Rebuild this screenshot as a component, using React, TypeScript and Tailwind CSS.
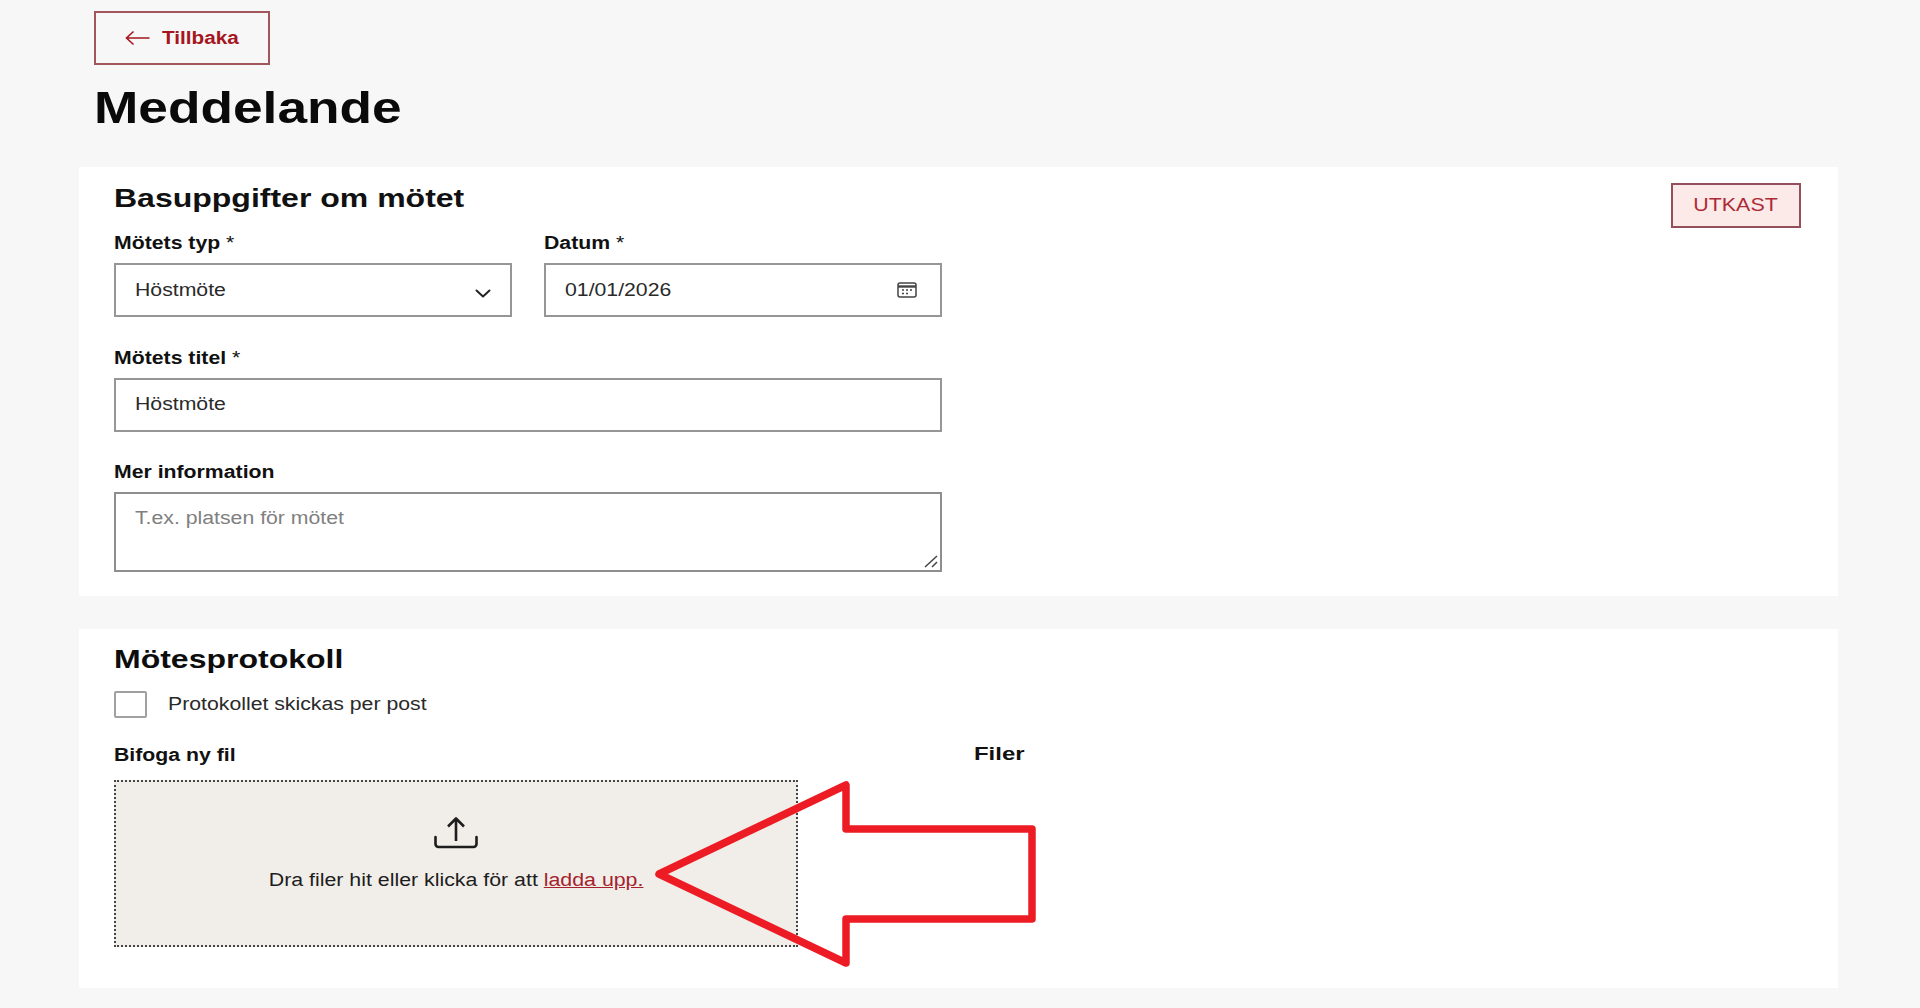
import type { ReactNode } from 'react'

const font = { fontFamily: '"Liberation Sans", Arial, sans-serif' }

function Wide({ children, className = 'origin-left scale-x-[1.18]' }: { children: ReactNode; className?: string }) {
  return <span className={`inline-block whitespace-nowrap ${className}`}>{children}</span>
}

function Label({ children, required }: { children: ReactNode; required?: boolean }) {
  return (
    <div className="h-5 text-[18px] leading-5 font-bold text-[#111]">
      <Wide>
        {children}
        {required && <span className="font-normal"> *</span>}
      </Wide>
    </div>
  )
}

function Field({ children, className = 'h-[54px]' }: { children: ReactNode; className?: string }) {
  return (
    <div className={`relative flex items-center justify-between border-2 border-[#969696] bg-white pr-[20px] pl-[19px] text-[18px] text-[#2a2a2a] ${className}`}>
      {children}
    </div>
  )
}

function Chevron() {
  return (
    <svg width="16" height="9" viewBox="0 0 16 9" fill="none" className="mt-[6px] -mr-[1px]">
      <path d="M1.5 1.5 8 7.5l6.5-6" stroke="#222" strokeWidth="2" strokeLinecap="round" strokeLinejoin="round" />
    </svg>
  )
}

function CalendarIcon() {
  return (
    <svg width="20" height="16" viewBox="0 0 20 16" fill="none">
      <rect x="1" y="1" width="18" height="14" rx="2" stroke="#444" strokeWidth="1.5" />
      <path d="M1 4.5h18" stroke="#444" strokeWidth="2.4" />
      <path d="M5 8h2M9 8h2M13 8h2M5 11.5h2M9 11.5h2" stroke="#444" strokeWidth="1.5" />
    </svg>
  )
}

function UploadIcon() {
  return (
    <svg width="44" height="32" viewBox="0 0 44 32" fill="none">
      <path d="M22 24V2M14 9.5 22 1.5l8 8" stroke="#1d1d1d" strokeWidth="2.6" strokeLinejoin="round" />
      <path d="M1.5 20v7a3 3 0 0 0 3 3h35a3 3 0 0 0 3-3v-7" stroke="#1d1d1d" strokeWidth="2.6" strokeLinecap="round" />
    </svg>
  )
}

export default function App() {
  return (
    <div className="relative h-[1008px] overflow-hidden bg-[#f7f7f7]" style={font}>
      <div className="pr-[82px] pl-[79px]">
        <div className="pl-[15px]">
          <a className="mt-[11px] flex h-[54px] w-[176px] items-center border-2 border-[#a0565b] pl-[29px] text-[18px] font-bold text-[#a5161f]">
            <svg width="25" height="16" viewBox="0 0 25 16" fill="none">
              <path d="M24.5 8H2M8.5 1.5 1.5 8l7 6.5" stroke="#a5161f" strokeWidth="1.6" />
            </svg>
            <span className="ml-[12px]">
              <Wide className="origin-left scale-x-[1.15]">Tillbaka</Wide>
            </span>
          </a>
          <h1 className="mt-[19px] h-12 text-[44px] leading-[48px] font-bold text-[#0a0a0a]">
            <Wide className="origin-left scale-x-[1.21]">Meddelande</Wide>
          </h1>
        </div>

        <section className="mt-[35px] flex h-[429px] items-start justify-between bg-white pt-[16px] pr-[37px] pl-[35px]">
          <div className="w-[828px]">
            <h2 className="h-[30px] text-[25px] leading-[30px] font-bold text-[#111]">
              <Wide className="origin-left scale-x-[1.28]">Basuppgifter om mötet</Wide>
            </h2>
            <div className="mt-[20px] grid grid-cols-[398px_1fr] gap-x-[32px]">
              <div>
                <Label required>Mötets typ</Label>
                <div className="mt-[10px]">
                  <Field>
                    <Wide>Höstmöte</Wide>
                    <Chevron />
                  </Field>
                </div>
              </div>
              <div>
                <Label required>Datum</Label>
                <div className="mt-[10px]">
                  <Field>
                    <Wide>01/01/2026</Wide>
                    <span className="mr-[3px]">
                      <CalendarIcon />
                    </span>
                  </Field>
                </div>
              </div>
            </div>
            <div className="mt-[31px]">
              <Label required>Mötets titel</Label>
              <div className="mt-[10px]">
                <Field className="h-[54px] border-[#858585] pb-[2px]">
                  <Wide>Höstmöte</Wide>
                </Field>
              </div>
            </div>
            <div className="mt-[30px]">
              <Label>Mer information</Label>
              <div className="mt-[10px]">
                <div className="relative h-[80px] border-2 border-[#8e8e8e] bg-white pt-[14px] pl-[19px] text-[18px] leading-5 text-[#808080]">
                  <Wide>T.ex. platsen för mötet</Wide>
                  <svg width="14" height="13" viewBox="0 0 14 13" fill="none" className="absolute right-[2px] bottom-[2px]">
                    <path d="M1 12 13 1M8 12l5-5" stroke="#444" strokeWidth="1.5" />
                  </svg>
                </div>
              </div>
            </div>
          </div>
          <div className="flex h-[45px] w-[130px] items-center justify-center border-2 border-[#93505a] bg-[#fbeae7] text-[18px] text-[#ae2a38]">
            <Wide className="origin-center scale-x-[1.19]">UTKAST</Wide>
          </div>
        </section>

        <section className="mt-[33px] h-[359px] bg-white pt-[15px] pl-[35px]">
          <h2 className="h-[30px] text-[25px] leading-[30px] font-bold text-[#0d0d0d]">
            <Wide className="origin-left scale-x-[1.28]">Mötesprotokoll</Wide>
          </h2>
          <div className="mt-[17px] flex items-center gap-[21px]">
            <div className="h-[27px] w-[33px] rounded-[2px] border-2 border-[#a0a0a0] bg-white" />
            <span className="text-[18px] text-[#2a2a2a]">
              <Wide>Protokollet skickas per post</Wide>
            </span>
          </div>
          <div className="mt-[27px] flex gap-[176px]">
            <div className="w-[684px]">
              <Label>Bifoga ny fil</Label>
              <div className="mt-[15px] flex h-[167px] flex-col items-center border-2 border-dotted border-[#444] bg-[#f1eeea] pt-[35px]">
                <UploadIcon />
                <p className="mt-[21px] h-5 text-[18px] leading-5 text-[#1d1d1d]">
                  <Wide className="origin-center scale-x-[1.185]">
                    Dra filer hit eller klicka för att <a className="text-[#a5222c] underline">ladda upp.</a>
                  </Wide>
                </p>
              </div>
            </div>
            <div className="-mt-[1px] text-[18px] leading-5 font-bold text-[#111]">
              <Wide className="origin-left scale-x-[1.33]">Filer</Wide>
            </div>
          </div>
        </section>
      </div>

      {/* annotation drawn on top of the screenshot */}
      <svg width="400" height="200" viewBox="0 0 400 200" fill="none" className="absolute top-[780px] left-[650px]">
        <path d="M9 94 196 5v44h186v90H196v44Z" stroke="#ed1c24" strokeWidth="7.5" strokeLinejoin="round" />
      </svg>
    </div>
  )
}
